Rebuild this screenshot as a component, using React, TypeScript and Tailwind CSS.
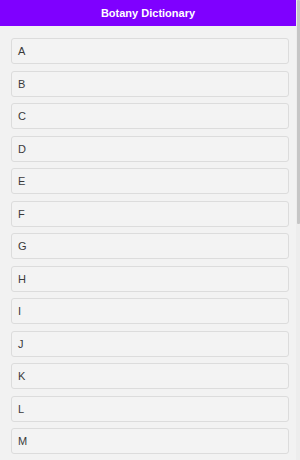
import React from 'react'

const letters = 'ABCDEFGHIJKLMNOPQRSTUVWXYZ'.split('')

export default function App() {
  return (
    <div
      className="relative h-screen overflow-hidden bg-[#f2f2f2] pr-[4px]"
      style={{ fontFamily: '"Liberation Sans", Arial, sans-serif' }}
    >
      <header className="h-[26px] bg-[#7f00ff] flex items-center justify-center">
        <h1 className="text-white font-bold text-[11px]">Botany Dictionary</h1>
      </header>
      <ul className="pt-[12px] pb-[66px] pl-[11px] pr-[7.5px]">
        {letters.map(l => (
          <li
            key={l}
            className="mb-[6.5px] border border-[#dcdcdc] rounded-[3px] bg-[#f3f3f3] px-[6px] py-[5px] text-[11px] leading-[14px] text-[#3a3a3a]"
          >
            {l}
          </li>
        ))}
      </ul>
      {/* scrollbar */}
      <div className="absolute top-0 right-0 bottom-0 w-[4px] bg-[#ededed] flex justify-end">
        <div className="w-[3px] h-[224px] bg-[#c6c6c6] rounded-[1px]" />
      </div>
    </div>
  )
}
